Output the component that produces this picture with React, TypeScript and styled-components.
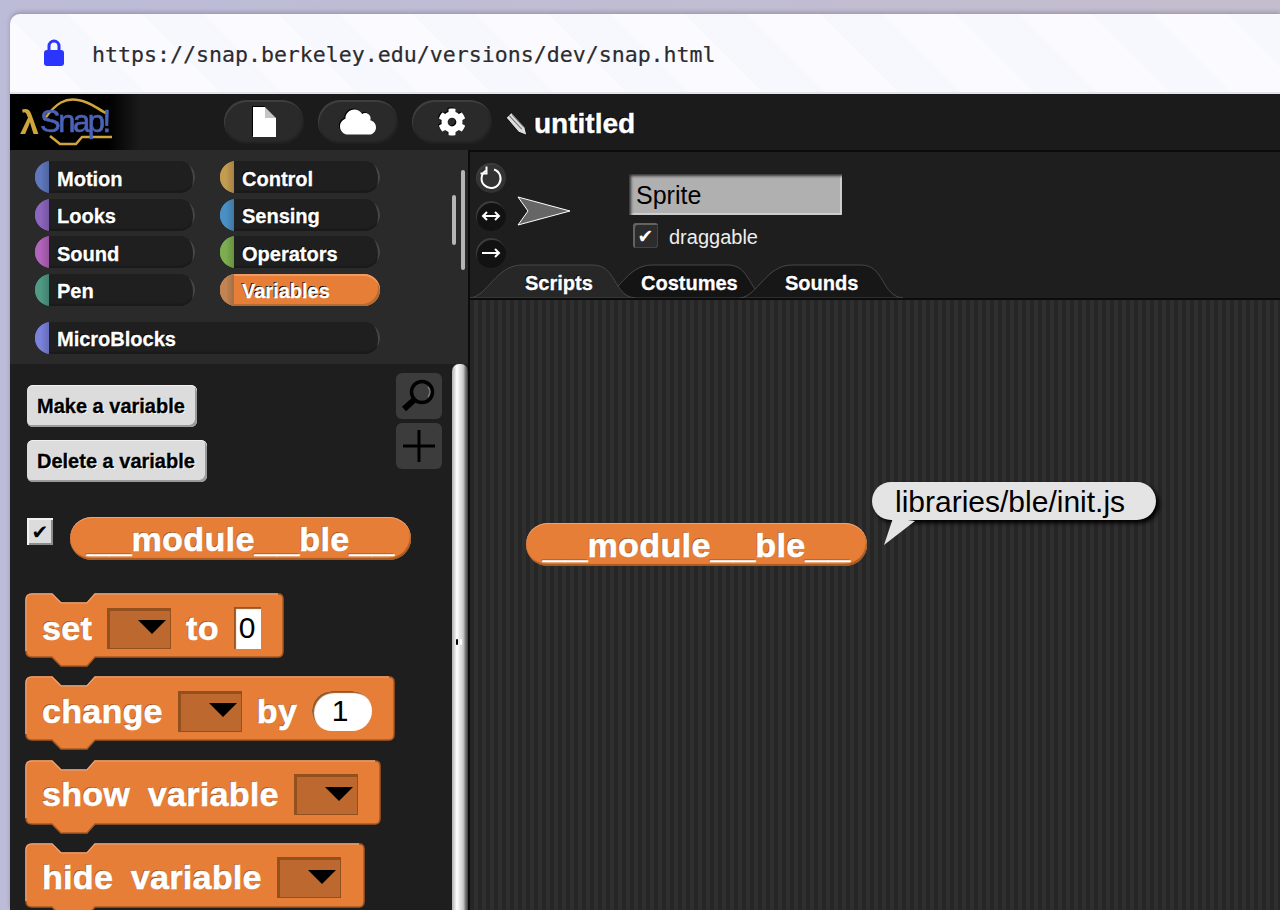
import React from 'react';
import styled, { createGlobalStyle } from 'styled-components';
import { FaCloud, FaCog } from 'react-icons/fa';

const GlobalStyle = createGlobalStyle`
  html, body {
    margin: 0;
    padding: 0;
    height: 910px;
    overflow: hidden;
    background: #bdbdd8;
    font-family: 'Liberation Sans', Arial, sans-serif;
  }
  * { box-sizing: border-box; }
`;

const Page = styled.div`
  width: 1280px;
  height: 910px;
  padding: 14px 0 0 10px;
  overflow: hidden;
  background: linear-gradient(90deg, #bcbcd8 0%, #c4bdcd 100%);
`;

const Browser = styled.div`
  height: 896px;
  display: flex;
  flex-direction: column;
  border-radius: 10px 0 0 0;
  overflow: hidden;
  box-shadow: 0 -2px 4px rgba(90, 80, 110, 0.35);
`;

const UrlBar = styled.div`
  flex: 0 0 80px;
  display: flex;
  align-items: center;
  gap: 28px;
  padding: 0 0 0 34px;
  border-bottom: 2px solid #e4e4ea;
  background: repeating-linear-gradient(
    45deg,
    #fbfbff 0 52px,
    #f6f8fe 52px 96px
  );
`;

const Url = styled.span`
  padding-top: 3px;
  font-family: 'DejaVu Sans Mono', monospace;
  font-size: 21.58px;
  color: #2b2b30;
  -webkit-text-stroke: 0.2px #2b2b30;
`;

const TopBar = styled.header`
  flex: 0 0 56px;
  display: flex;
  align-items: center;
  background: #1b1b1b;
`;

const Logo = styled.div`
  position: relative;
  flex: 0 0 214px;
  height: 56px;
  background: linear-gradient(90deg, #000 0, #000 98px, #1b1b1b 130px);
`;

const LogoMark = styled.span`
  position: absolute;
  left: 30px;
  top: 10px;
  font-size: 31px;
  letter-spacing: -2.5px;
  color: #4a62b8;
  -webkit-text-stroke: 0.6px #4a62b8;
  filter: blur(0.5px);
`;

const LogoLambda = styled.span`
  position: absolute;
  left: 10px;
  top: 9px;
  font-size: 34px;
  font-weight: 700;
  color: #d0a63c;
  filter: blur(0.5px);
`;

const LogoOutline = styled.svg`
  position: absolute;
  left: 8px;
  top: 0;
  filter: blur(0.4px);
`;

const ToolButton = styled.button`
  width: 80px;
  height: 44px;
  margin-right: 14px;
  padding: 0;
  display: flex;
  align-items: center;
  justify-content: center;
  border: 0;
  border-radius: 22px;
  background: #2a2a2a;
  color: #fff;
  box-shadow: inset 1px 2px 0 #3e3e3e, inset -1px -2px 2px #1f1f1f;
  svg {
    filter: drop-shadow(-1px -1px 0 #000);
  }
`;

const ProjectName = styled.div`
  display: flex;
  align-items: center;
  gap: 6px;
  margin: 3px 0 0 -1px;
  font-size: 28px;
  font-weight: 700;
  color: #fff;
  -webkit-text-stroke: 0.4px #fff;
  text-shadow: -1px -1px 0 #000;
`;

const Main = styled.div`
  flex: 1;
  display: flex;
  min-height: 0;
`;

const LeftColumn = styled.section`
  flex: 0 0 458px;
  display: flex;
  flex-direction: column;
`;

const Categories = styled.div`
  position: relative;
  flex: 0 0 214px;
  padding: 11px 0 0 25px;
  background: #2a2a2a;
`;

const CategoryGrid = styled.div`
  display: grid;
  grid-template-columns: 160px 160px;
  column-gap: 25px;
  grid-auto-rows: 32px;
  row-gap: 5.6px;
`;

const CategoryPill = styled.div<{ $color: string; $active?: boolean; $wide?: boolean }>`
  position: relative;
  width: ${p => (p.$wide ? '345px' : '160px')};
  height: 32px;
  margin-top: ${p => (p.$wide ? '16px' : '0')};
  display: flex;
  align-items: center;
  padding: 4px 0 0 22px;
  border-radius: 16px;
  overflow: hidden;
  font-size: 20px;
  font-weight: 700;
  color: #fff;
  -webkit-text-stroke: 0.3px #fff;
  text-shadow: -1px -1px 0 #000;
  background: ${p => (p.$active ? '#e67e37' : '#1f1f1f')};
  box-shadow: ${p =>
    p.$active
      ? 'inset 0 2px 0 #ee9c64, inset -2px -2px 0 #b96a30'
      : 'inset -14px 2px 0 -12px #464646, inset 0 -2px 1px #1a1a1a'};
  &::before {
    content: '';
    position: absolute;
    left: 0;
    top: 0;
    bottom: 0;
    width: 14px;
    background: linear-gradient(90deg, ${p => p.$color} 40%, rgba(0, 0, 0, 0.28) 140%), ${p => p.$color};
  }
`;

const Track = styled.div<{ $left: number; $top: number; $height: number }>`
  position: absolute;
  left: ${p => p.$left}px;
  top: ${p => p.$top}px;
  width: 4px;
  height: ${p => p.$height}px;
  border-radius: 2px;
  background: #b5b5b5;
`;

const Palette = styled.div`
  position: relative;
  flex: 1;
  min-height: 0;
  padding: 9px 0 0 17px;
  background: #1e1e1e;
`;

const PaletteTop = styled.div`
  display: flex;
  justify-content: space-between;
  width: 415px;
`;

const PaletteButtons = styled.div`
  display: flex;
  flex-direction: column;
  align-items: flex-start;
  gap: 13px;
  padding-top: 12px;
`;

const FlatButton = styled.button`
  height: 42px;
  padding: 0 12px 0 10px;
  border: 0;
  border-radius: 6px;
  font-family: inherit;
  font-size: 20px;
  font-weight: 700;
  color: #000;
  -webkit-text-stroke: 0.3px #000;
  text-shadow: 1px 1px 0 #fff;
  background: #dcdcdc;
  box-shadow: inset 0 1px 0 #f0f0f0, inset -2px -2px 0 #9a9a9a;
`;

const PaletteTools = styled.div`
  display: flex;
  flex-direction: column;
  gap: 4px;
`;

const IconTile = styled.div`
  width: 46px;
  height: 46px;
  display: flex;
  align-items: center;
  justify-content: center;
  border-radius: 6px;
  background: #3c3c3c;
`;

const ScrollHandle = styled.div`
  position: absolute;
  left: 442px;
  top: 0;
  bottom: 0;
  width: 16px;
  border-radius: 7px 7px 0 0;
  background: linear-gradient(90deg, #b0b0b0 0, #fff 30%, #c8c8c8 70%, #777 85%, #3a3a3a 100%);
  &::after {
    content: '';
    position: absolute;
    left: 4px;
    top: 275px;
    width: 2px;
    height: 6px;
    border-radius: 1px;
    background: #000;
    box-shadow: 4px 0 0 #fff;
  }
`;

const WatcherRow = styled.div`
  display: flex;
  align-items: flex-start;
  gap: 17px;
  margin-top: 35px;
`;

const WatcherCheck = styled.div`
  width: 26px;
  height: 27px;
  margin-top: 1px;
  display: flex;
  align-items: center;
  justify-content: center;
  font-family: 'DejaVu Sans', sans-serif;
  font-size: 20px;
  color: #000;
  background: #dcdcdc;
  box-shadow: inset 2px 2px 0 #f2f2f2, inset -2px -2px 0 #8c8c8c;
`;

const Reporter = styled.div`
  width: 341px;
  height: 43px;
  padding-bottom: 2px;
  display: flex;
  align-items: center;
  justify-content: center;
  border-radius: 22px;
  font-size: 34px;
  font-weight: 700;
  letter-spacing: 0.4px;
  color: #fff;
  -webkit-text-stroke: 0.6px #fff;
  text-shadow: -1px -1px 0 #9c5520;
  background: #e67e37;
  box-shadow: inset 0 1px 0 #f0a271, inset -1px -2px 1px #a85a22;
`;

const ReporterLabel = styled.span`
  line-height: 34px;
`;

const Underscores = styled.span`
  font-size: 40px;
  letter-spacing: 0;
  line-height: 34px;
`;

const BlockList = styled.div`
  display: flex;
  flex-direction: column;
  gap: 9.3px;
  margin: 33px 0 0 -2px;
`;

const BlockWrap = styled.div<{ $width: number }>`
  position: relative;
  width: ${p => p.$width}px;
  height: 74px;
`;

const BlockShape = styled.svg`
  position: absolute;
  left: 0;
  top: 0;
`;

const BlockContent = styled.div`
  position: relative;
  height: 70px;
  padding: 0 0 0 17px;
  display: flex;
  align-items: center;
  gap: 15px;
  font-size: 34px;
  font-weight: 700;
  letter-spacing: 0.3px;
  word-spacing: 8px;
  color: #fff;
  -webkit-text-stroke: 0.6px #fff;
  text-shadow: -1px -1px 0 #9c5520;
`;

const Dropdown = styled.div`
  flex: 0 0 64px;
  height: 41px;
  display: flex;
  align-items: center;
  justify-content: flex-end;
  padding: 0 5px 2px 0;
  background: #bd682e;
  box-shadow: inset 1px 1px 0 2px #93501f, inset -1px -1px 0 #f0a271;
  &::after {
    content: '';
    width: 0;
    height: 0;
    border-left: 14px solid transparent;
    border-right: 14px solid transparent;
    border-top: 14px solid #000;
  }
`;

const NumberSlot = styled.div<{ $round?: boolean }>`
  width: ${p => (p.$round ? '60px' : '27px')};
  height: ${p => (p.$round ? '40px' : '42px')};
  padding-right: ${p => (p.$round ? '4px' : '0')};
  display: flex;
  align-items: center;
  justify-content: center;
  border-radius: ${p => (p.$round ? '20px' : '0')};
  font-size: 30px;
  font-weight: 400;
  color: #000;
  -webkit-text-stroke: 0;
  text-shadow: none;
  background: #fff;
  box-shadow: inset 2px 2px 1px #9c5520;
`;

const RightColumn = styled.section`
  flex: 1;
  display: flex;
  flex-direction: column;
  min-width: 0;
  border-left: 2px solid #0c0c0c;
  border-top: 2px solid #0c0c0c;
  background: #1e1e1e;
`;

const SpriteBar = styled.div`
  flex: 0 0 110px;
  min-height: 0;
  display: flex;
  padding: 11px 0 0 6px;
`;

const RotationButtons = styled.div`
  display: flex;
  flex-direction: column;
  gap: 7.5px;
`;

const RotationButton = styled.div<{ $active?: boolean }>`
  flex: 0 0 30px;
  width: 30px;
  display: flex;
  align-items: center;
  justify-content: center;
  border-radius: 50%;
  background: ${p => (p.$active ? '#333' : '#121212')};
  box-shadow: inset 1px 2px 0 #3c3c3c;
`;

const SpriteArrow = styled.svg`
  margin: 33px 0 0 11px;
`;

const SpriteDetails = styled.div`
  display: flex;
  flex-direction: column;
  align-items: flex-start;
  margin: 11px 0 0 58px;
`;

const NameField = styled.div`
  width: 213px;
  height: 41px;
  display: flex;
  align-items: center;
  padding: 2px 0 0 7px;
  font-size: 25px;
  color: #000;
  background: #b0b0b0;
  box-shadow: inset 2px 2px 3px #303030, inset -2px -2px 0 #d0d0d0, inset 0 -1px 0 #e0e0e0;
`;

const DraggableRow = styled.label`
  display: flex;
  align-items: center;
  gap: 10px;
  margin: 7px 0 0 4px;
  font-size: 20px;
  color: #eee;
`;

const DraggableText = styled.span`
  padding: 4px 0 0 1px;
`;

const DragCheck = styled.span`
  width: 25px;
  height: 25px;
  display: flex;
  align-items: center;
  justify-content: center;
  border-radius: 3px;
  font-family: 'DejaVu Sans', sans-serif;
  font-size: 19px;
  color: #fff;
  background: #2c2c2c;
  box-shadow: inset 2px 2px 0 #636363, inset -1px -1px 0 #444;
`;

const TabRow = styled.div`
  flex: 0 0 38px;
  display: flex;
  align-items: flex-end;
  border-bottom: 2px solid #0c0c0c;
`;

const TabItem = styled.div<{ $width: number; $overlap: number; $layer: number; $padLeft: number }>`
  position: relative;
  z-index: ${p => p.$layer};
  width: ${p => p.$width}px;
  height: 34px;
  margin-left: ${p => p.$overlap}px;
  padding: 8px 0 0 ${p => p.$padLeft}px;
  font-size: 20px;
  font-weight: 700;
  color: #fff;
  -webkit-text-stroke: 0.3px #fff;
  text-shadow: -1px -1px 0 #000;
`;

const TabShape = styled.svg`
  position: absolute;
  left: 0;
  top: 0;
  z-index: -1;
`;

const ScriptCanvas = styled.div`
  position: relative;
  flex: 1;
  min-height: 0;
  background: repeating-linear-gradient(90deg, #262626 0 4px, #2f2f2f 4px 8px);
`;

const ScriptReporter = styled(Reporter)`
  position: absolute;
  left: 56px;
  top: 223px;
`;

const Bubble = styled.div`
  position: absolute;
  left: 402px;
  top: 182px;
  width: 284px;
  height: 38px;
  padding: 2px 0 0 23px;
  display: flex;
  align-items: center;
  border-radius: 19px;
  font-size: 30px;
  color: #000;
  background: #e4e4e4;
  box-shadow: 3px 3px 4px #000;
`;

const BubbleTail = styled.svg`
  position: absolute;
  left: 411px;
  top: 218px;
`;

const blockPath = (w: number) =>
  `M1 7 Q1 1 7 1 L27 1 L36 10 L62 10 L70 1 L${w - 6} 1 Q${w - 1} 1 ${w - 1} 6 ` +
  `L${w - 1} 58 Q${w - 1} 64 ${w - 6} 64 L70 64 L62 73 L36 73 L27 64 L7 64 Q1 64 1 58 Z`;

const Block = ({ width, children }: { width: number; children: React.ReactNode }) => (
  <BlockWrap $width={width}>
    <BlockShape width={width} height={74}>
      <path d={blockPath(width)} fill="#e67e37" stroke="#a85a22" strokeWidth="1.5" />
      <path
        d={`M1 58 L1 7 Q1 1 7 1 L27 1 L36 10 L62 10 L70 1 L${width - 6} 1`}
        fill="none"
        stroke="#f0a271"
        strokeWidth="1.5"
      />
    </BlockShape>
    <BlockContent>{children}</BlockContent>
  </BlockWrap>
);

const VariableReporter = () => (
  <ReporterLabel>
    <Underscores>__</Underscores>
    module
    <Underscores>__</Underscores>
    ble
    <Underscores>__</Underscores>
  </ReporterLabel>
);

const Tab = ({
  label,
  width,
  overlap,
  layer,
  padLeft,
  fill,
}: {
  label: string;
  width: number;
  overlap: number;
  layer: number;
  padLeft: number;
  fill: string;
}) => (
  <TabItem $width={width} $overlap={overlap} $layer={layer} $padLeft={padLeft}>
    <TabShape width={width} height={34}>
      <path
        d={`M0 34 C18 32 26 1 52 1 L${width - 42} 1 C${width - 18} 1 ${width - 22} 32 ${width} 34 Z`}
        fill={fill}
        stroke="#474747"
        strokeWidth="1"
      />
    </TabShape>
    {label}
  </TabItem>
);

const leftCategories = [
  ['Motion', '#5f78bd'],
  ['Control', '#c49c50'],
  ['Looks', '#8c66be'],
  ['Sensing', '#4a90c4'],
  ['Sound', '#b263bb'],
  ['Operators', '#7cae50'],
  ['Pen', '#4f9a84'],
];

export default function App(): JSX.Element {
  return (
    <Page>
      <GlobalStyle />
      <Browser>
        <UrlBar>
          <svg width="20" height="28" viewBox="0 0 20 28">
            <path d="M5 13V7a5 5 0 0 1 10 0v6" fill="none" stroke="#2a35ff" strokeWidth="3" />
            <rect x="0" y="11" width="20" height="16" rx="3" fill="#2a35ff" />
          </svg>
          <Url>https://snap.berkeley.edu/versions/dev/snap.html</Url>
        </UrlBar>
        <TopBar>
          <Logo>
            <LogoOutline width="110" height="56">
              <path
                d="M26 26 C38 8 48 4 60 6 C74 8 80 16 90 20"
                fill="none"
                stroke="#d0a63c"
                strokeWidth="2.5"
              />
              <path d="M32 42 L42 50 L58 50 L64 43 L94 43" fill="none" stroke="#d0a63c" strokeWidth="2.5" />
            </LogoOutline>
            <LogoLambda>λ</LogoLambda>
            <LogoMark>Snap!</LogoMark>
          </Logo>
          <ToolButton>
            <svg width="24" height="30" viewBox="0 0 24 30">
              <path d="M1 0H13V11H24V30H1Z" fill="#fff" />
              <path d="M13 0L24 11H13Z" fill="#c4c4c4" />
            </svg>
          </ToolButton>
          <ToolButton>
            <FaCloud size={36} />
          </ToolButton>
          <ToolButton>
            <FaCog size={28} />
          </ToolButton>
          <ProjectName>
            <svg width="23" height="26" viewBox="0 0 22 24">
              <path d="M1 6 L6 1 L19 15 L21 23 L13 20 Z" fill="#ddd" stroke="#111" strokeWidth="1" />
              <path d="M4 4 L16 17 M7 3 L18 15" stroke="#777" strokeWidth="1" />
            </svg>
            untitled
          </ProjectName>
        </TopBar>
        <Main>
          <LeftColumn>
            <Categories>
              <CategoryGrid>
                {leftCategories.map(([name, color]) => (
                  <CategoryPill key={name} $color={color}>
                    {name}
                  </CategoryPill>
                ))}
                <CategoryPill $color="#c28452" $active>
                  Variables
                </CategoryPill>
              </CategoryGrid>
              <CategoryPill $color="#7b82dc" $wide>
                MicroBlocks
              </CategoryPill>
              <Track $left={451} $top={20} $height={100} />
              <Track $left={442} $top={45} $height={50} />
            </Categories>
            <Palette>
              <PaletteTop>
                <PaletteButtons>
                  <FlatButton>Make a variable</FlatButton>
                  <FlatButton>Delete a variable</FlatButton>
                </PaletteButtons>
                <PaletteTools>
                  <IconTile>
                    <svg width="36" height="36" viewBox="0 0 36 36">
                      <circle cx="21" cy="14" r="10.5" fill="none" stroke="#000" strokeWidth="3.5" />
                      <path d="M27 9 a8 8 0 0 1 0 10" fill="none" stroke="#777" strokeWidth="1.5" />
                      <path d="M13 22 L3 31" stroke="#000" strokeWidth="6" />
                    </svg>
                  </IconTile>
                  <IconTile>
                    <svg width="34" height="34" viewBox="0 0 34 34">
                      <path d="M17 1V33M1 17H33" stroke="#000" strokeWidth="3" />
                    </svg>
                  </IconTile>
                </PaletteTools>
              </PaletteTop>
              <WatcherRow>
                <WatcherCheck>✔</WatcherCheck>
                <Reporter>
                  <VariableReporter />
                </Reporter>
              </WatcherRow>
              <BlockList>
                <Block width={259}>
                  set
                  <Dropdown />
                  to
                  <NumberSlot>0</NumberSlot>
                </Block>
                <Block width={370}>
                  change
                  <Dropdown />
                  by
                  <NumberSlot $round>1</NumberSlot>
                </Block>
                <Block width={356}>
                  show variable
                  <Dropdown />
                </Block>
                <Block width={340}>
                  hide variable
                  <Dropdown />
                </Block>
              </BlockList>
              <ScrollHandle />
            </Palette>
          </LeftColumn>
          <RightColumn>
            <SpriteBar>
              <RotationButtons>
                <RotationButton $active>
                  <svg width="24" height="24" viewBox="0 0 24 24">
                    <path d="M15 3.5 A9.5 9.5 0 1 1 7 4.5" fill="none" stroke="#fff" strokeWidth="2" />
                    <path d="M7.5 0.5 V7.5 H1.5" fill="none" stroke="#fff" strokeWidth="2" />
                  </svg>
                </RotationButton>
                <RotationButton>
                  <svg width="20" height="12" viewBox="0 0 20 12">
                    <path d="M2 6H18M6 2L2 6L6 10M14 2L18 6L14 10" fill="none" stroke="#fff" strokeWidth="2" />
                  </svg>
                </RotationButton>
                <RotationButton>
                  <svg width="20" height="12" viewBox="0 0 20 12">
                    <path d="M1 6H18M14 2L18 6L14 10" fill="none" stroke="#fff" strokeWidth="2" />
                  </svg>
                </RotationButton>
              </RotationButtons>
              <SpriteArrow width="54" height="30" viewBox="0 0 54 30">
                <path d="M1 1 L53 15 L1 29 L11 15 Z" fill="#666" stroke="#fff" strokeWidth="1" />
              </SpriteArrow>
              <SpriteDetails>
                <NameField>Sprite</NameField>
                <DraggableRow>
                  <DragCheck>✔</DragCheck>
                  <DraggableText>draggable</DraggableText>
                </DraggableRow>
              </SpriteDetails>
            </SpriteBar>
            <TabRow>
              <Tab label="Scripts" width={165} overlap={0} layer={3} padLeft={55} fill="#272727" />
              <Tab label="Costumes" width={170} overlap={-35} layer={1} padLeft={41} fill="#141414" />
              <Tab label="Sounds" width={163} overlap={-30} layer={2} padLeft={45} fill="#171717" />
            </TabRow>
            <ScriptCanvas>
              <ScriptReporter>
                <VariableReporter />
              </ScriptReporter>
              <Bubble>libraries/ble/init.js</Bubble>
              <BubbleTail width="36" height="28" viewBox="0 0 36 28">
                <path d="M3 27 L12 0 L34 3 Z" fill="#e4e4e4" />
              </BubbleTail>
            </ScriptCanvas>
          </RightColumn>
        </Main>
      </Browser>
    </Page>
  );
}
